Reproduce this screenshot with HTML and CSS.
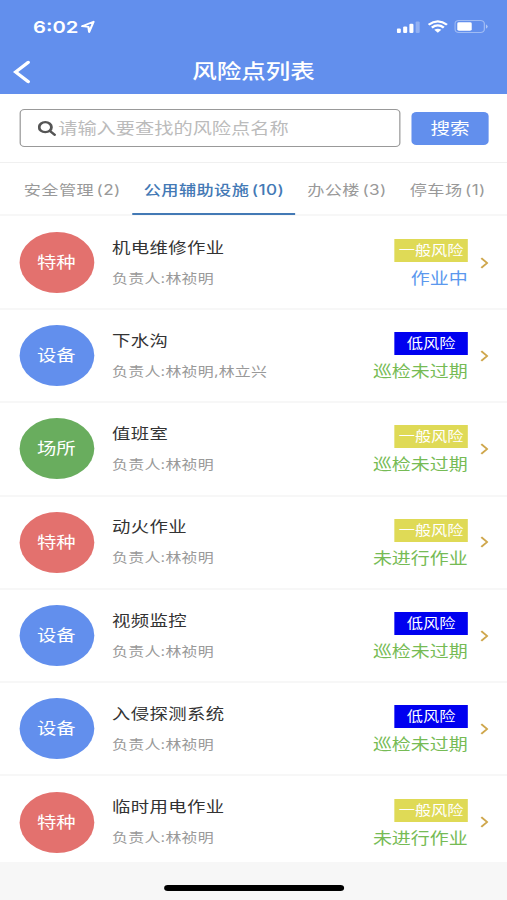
FILE: index.html
```html
<!DOCTYPE html>
<html lang="zh-CN">
    <head>
        <meta charset="UTF-8" />
        <meta name="viewport" content="width=device-width, initial-scale=1.0" />
        <title>风险点列表</title>
        <link rel="stylesheet" href="styles.css">
    </head>
    <body>
        <div id="pantalla">
            <header>
                <div class="status">
                    <span class="hora">6:02</span>
                    <svg class="flecha" width="12" height="14" viewBox="0 0 12 14"><path d="M1 6.2 L10.4 1.8 L6.8 12 L6.2 6.8 Z" /></svg>
                    <div class="iconos">
                        <svg width="19" height="12" viewBox="0 0 19 12">
                            <rect x="0" y="7.6" width="3.3" height="4.4" rx="1" />
                            <rect x="5.2" y="5.6" width="3.3" height="6.4" rx="1" />
                            <rect x="10.3" y="2.8" width="3.3" height="9.2" rx="1" />
                            <rect x="15.4" y="0.5" width="3.3" height="11.5" rx="1" opacity=".3" />
                        </svg>
                        <svg class="wifi" width="17" height="13" viewBox="0 0 17 13">
                            <path d="M1 4.7 Q8.5 -2 16 4.7 M3.6 7.6 Q8.5 3.3 13.4 7.6" fill="none" stroke="#fff" stroke-width="2.1" />
                            <path d="M5.6 9.8 Q8.5 7.5 11.4 9.8 L8.5 12.8 Z" />
                        </svg>
                        <svg class="bateria" width="28" height="13" viewBox="0 0 28 13">
                            <rect x=".5" y=".5" width="24" height="12" rx="3.2" fill="none" stroke="#fff" opacity=".4" />
                            <rect x="2.4" y="2.3" width="11.8" height="8.4" rx="1.4" />
                            <path d="M25.8 4.2 Q28.6 6.5 25.8 8.8 Z" opacity=".5" />
                        </svg>
                    </div>
                </div>
                <div class="barra">
                    <svg class="volver" width="15" height="24" viewBox="0 0 15 24"><path d="M13 2.4 L2.8 12 L13 21.6" /></svg>
                    <h1>风险点列表</h1>
                </div>
            </header>
            <div class="buscador">
                <div class="campo">
                    <svg width="15" height="15" viewBox="0 0 15 15"><circle cx="6" cy="6.2" r="5" /><path d="M9.8 10 L13.6 13.8" /></svg>
                    <span>请输入要查找的风险点名称</span>
                </div>
                <button>搜索</button>
            </div>
            <nav>
                <a>安全管理<i>(2)</i></a>
                <a class="activo">公用辅助设施<i>(10)</i></a>
                <a>办公楼<i>(3)</i></a>
                <a>停车场<i>(1)</i></a>
            </nav>
            <div class="lista">
                <div class="fila">
                    <div class="circulo rojo">特种</div>
                    <div class="datos"><h2>机电维修作业</h2><p>负责人:林祯明</p></div>
                    <div class="estado"><span class="nivel">一般风险</span><span class="texto azul">作业中</span></div>
                    <svg class="ir" width="7" height="12" viewBox="0 0 7 12"><path d="M1 1.2 L5.7 6 L1 10.8" /></svg>
                </div>
                <div class="fila">
                    <div class="circulo">设备</div>
                    <div class="datos"><h2>下水沟</h2><p>负责人:林祯明,林立兴</p></div>
                    <div class="estado"><span class="nivel bajo">低风险</span><span class="texto">巡检未过期</span></div>
                    <svg class="ir" width="7" height="12" viewBox="0 0 7 12"><path d="M1 1.2 L5.7 6 L1 10.8" /></svg>
                </div>
                <div class="fila">
                    <div class="circulo verde">场所</div>
                    <div class="datos"><h2>值班室</h2><p>负责人:林祯明</p></div>
                    <div class="estado"><span class="nivel">一般风险</span><span class="texto">巡检未过期</span></div>
                    <svg class="ir" width="7" height="12" viewBox="0 0 7 12"><path d="M1 1.2 L5.7 6 L1 10.8" /></svg>
                </div>
                <div class="fila">
                    <div class="circulo rojo">特种</div>
                    <div class="datos"><h2>动火作业</h2><p>负责人:林祯明</p></div>
                    <div class="estado"><span class="nivel">一般风险</span><span class="texto">未进行作业</span></div>
                    <svg class="ir" width="7" height="12" viewBox="0 0 7 12"><path d="M1 1.2 L5.7 6 L1 10.8" /></svg>
                </div>
                <div class="fila">
                    <div class="circulo">设备</div>
                    <div class="datos"><h2>视频监控</h2><p>负责人:林祯明</p></div>
                    <div class="estado"><span class="nivel bajo">低风险</span><span class="texto">巡检未过期</span></div>
                    <svg class="ir" width="7" height="12" viewBox="0 0 7 12"><path d="M1 1.2 L5.7 6 L1 10.8" /></svg>
                </div>
                <div class="fila">
                    <div class="circulo">设备</div>
                    <div class="datos"><h2>入侵探测系统</h2><p>负责人:林祯明</p></div>
                    <div class="estado"><span class="nivel bajo">低风险</span><span class="texto">巡检未过期</span></div>
                    <svg class="ir" width="7" height="12" viewBox="0 0 7 12"><path d="M1 1.2 L5.7 6 L1 10.8" /></svg>
                </div>
                <div class="fila">
                    <div class="circulo rojo">特种</div>
                    <div class="datos"><h2>临时用电作业</h2><p>负责人:林祯明</p></div>
                    <div class="estado"><span class="nivel">一般风险</span><span class="texto">未进行作业</span></div>
                    <svg class="ir" width="7" height="12" viewBox="0 0 7 12"><path d="M1 1.2 L5.7 6 L1 10.8" /></svg>
                </div>
            </div>
            <footer><div class="inicio"></div></footer>
        </div>
    </body>
</html>
```
FILE: styles.css
```css
*{
    margin: 0;
    padding: 0;
    box-sizing: border-box;
}
html, body{
    width: 507px;
    height: 900px;
    overflow: hidden;
}
/* 414px wide screen stretched to the window */
#pantalla{
    width: 414px;
    height: 900px;
    display: flex;
    flex-direction: column;
    transform: scaleX(1.22464);
    transform-origin: 0 0;
    background-color: #fff;
    font-family: Inter, "Noto Sans CJK SC", sans-serif;
}
svg{
    display: block;
    flex: none;
}
header{
    height: 94px;
    background-color: #628fed;
    color: #fff;
}
.status{
    height: 49px;
    padding: 4px 15px 0 27px;
    display: flex;
    align-items: center;
}
.hora{
    font-size: 16.5px;
    font-weight: 600;
    width: 36px;
    white-space: nowrap;
}
.flecha{
    margin-left: 3px;
    fill: none;
    stroke: #fff;
    stroke-width: 1.8;
    stroke-linejoin: round;
}
.iconos{
    margin-left: auto;
    display: flex;
    align-items: center;
    fill: #fff;
}
.wifi{
    margin-left: 6px;
}
.bateria{
    margin-left: 5px;
}
.barra{
    height: 45px;
    padding-left: 10px;
    display: flex;
    align-items: center;
}
.volver{
    fill: none;
    stroke: #fff;
    stroke-width: 3;
    stroke-linecap: round;
}
.barra h1{
    flex: 1;
    padding-right: 25px;
    text-align: center;
    font-size: 20px;
    font-weight: 500;
    line-height: 30px;
}
.buscador{
    height: 69px;
    padding: 0 15px 0 15.5px;
    display: flex;
    align-items: center;
    justify-content: space-between;
    border-bottom: 1px solid #f0f0f0;
}
.campo{
    width: 311px;
    height: 38px;
    padding-left: 14px;
    display: flex;
    align-items: center;
    border: 1px solid #999;
    border-radius: 4px;
    color: #bbb;
    font-size: 15.7px;
    line-height: 24px;
    white-space: nowrap;
}
.campo span{
    padding-top: 1px;
}
.campo svg{
    margin-right: 2px;
    fill: none;
    stroke: #555;
    stroke-width: 2.3;
    stroke-linecap: round;
}
.buscador button{
    width: 63px;
    height: 33px;
    border: none;
    border-radius: 4px;
    background-color: #628fed;
    color: #fff;
    font-family: inherit;
    font-size: 16px;
    line-height: 24px;
}
nav{
    height: 53px;
    padding-left: 10px;
    display: flex;
    border-bottom: 2px solid #f7f7f7;
    color: #999;
    font-size: 14px;
    letter-spacing: .35px;
    line-height: 53px;
    white-space: nowrap;
}
nav a{
    height: 52px;
    padding: 0 9.4px;
}
nav i{
    margin-left: 2px;
    font-style: normal;
}
nav .activo{
    border-bottom: 2px solid #4379b5;
    color: #4379b5;
    font-weight: 500;
}
.lista{
    height: 646px;
    overflow: hidden;
}
.fila{
    height: 93.3px;
    padding: 0 15px 0 15.5px;
    display: flex;
    align-items: center;
    border-bottom: 2px solid #f7f7f7;
}
.fila:first-child{
    height: 94px;
    padding-top: 1px;
}
.circulo{
    width: 61px;
    height: 61px;
    border-radius: 50%;
    background-color: #628fed;
    color: #fff;
    text-align: center;
    font-size: 15.8px;
    line-height: 61px;
}
.rojo{
    background-color: #e3716e;
}
.verde{
    background-color: #69ad5e;
}
.datos{
    flex: 1;
    padding-left: 15px;
}
.datos h2{
    color: #333;
    font-size: 15px;
    font-weight: 400;
    letter-spacing: .3px;
    line-height: 30px;
}
.datos p{
    color: #999;
    font-size: 13px;
    letter-spacing: .2px;
    line-height: 30px;
}
.estado{
    width: 90px;
    margin-right: 10px;
    padding-top: 8px;
    display: flex;
    flex-direction: column;
    align-items: flex-end;
}
.nivel{
    width: 60px;
    height: 23px;
    background-color: #dfda56;
    color: #fff;
    text-align: center;
    font-size: 13.2px;
    line-height: 23px;
}
.bajo{
    background-color: #0000f0;
}
.texto{
    margin-top: 2px;
    color: #76bb55;
    font-size: 15.5px;
    line-height: 30px;
}
.azul{
    color: #5b98ee;
}
.ir{
    fill: none;
    stroke: #cfa74d;
    stroke-width: 1.7;
}
footer{
    flex: 1;
    padding-top: 23px;
    background-color: #f7f7f7;
}
.inicio{
    width: 147px;
    height: 6px;
    margin: auto;
    border-radius: 3px;
    background-color: #000;
}
```
